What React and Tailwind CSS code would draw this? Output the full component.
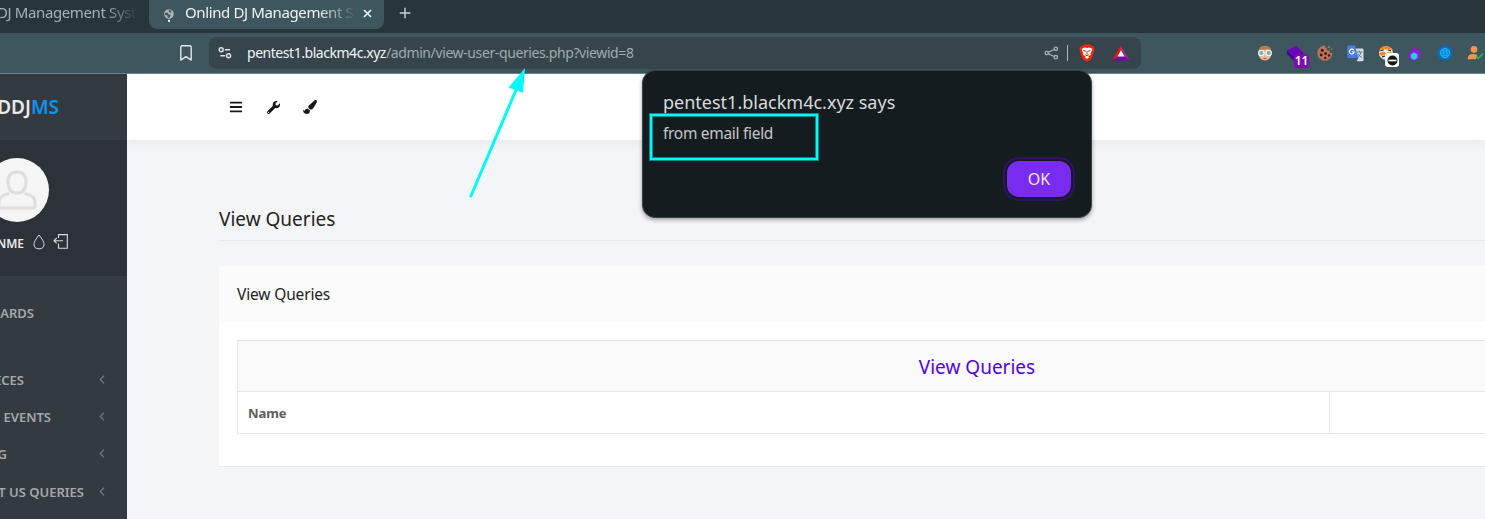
import React from "react";
import { FaBars, FaWrench, FaPaintBrush } from "react-icons/fa";

function GlobeIcon() {
  return (
    <svg width="12" height="16" viewBox="0 0 12 16" className="shrink-0">
      <circle cx="6" cy="6" r="4.8" fill="#a9b4b8" />
      <path d="M2 5 4.5 4.6 5.6 6.4 7.6 6.8 7 9 5 10 4.4 7.6 2.2 7Z M5.6 2 8.6 2.6 8 4.4 6.2 4.2Z" fill="#43575e" />
      <rect x="5" y="11.8" width="2" height="2" fill="#fff" />
    </svg>
  );
}

function TabStrip() {
  return (
    <div className="flex h-[33px] bg-[#28363c] text-[15px] leading-[20px] tracking-[-0.38px]">
      <div className="flex w-[136px] justify-end overflow-hidden pt-[2px] text-[#a9b0b3] [mask-image:linear-gradient(to_right,#000_105px,transparent_138px)]">
        <span className="shrink-0 whitespace-nowrap">Onlind DJ Management Syst</span>
      </div>
      <div className="ml-[13px] flex h-[29px] w-[235px] rounded-b-[8px] bg-[#3e565e] pl-[14px]">
        <div className="pt-[8px]">
          <GlobeIcon />
        </div>
        <div className="ml-[10px] w-[168px] overflow-hidden whitespace-nowrap pt-[2px] text-[#f2f4f5] [mask-image:linear-gradient(to_right,#000_133px,transparent_171px)]">
          Onlind DJ Management System
        </div>
        <svg width="9" height="9" viewBox="0 0 9 9" className="ml-[10px] mt-[9px]">
          <path d="M1 1 8 8M8 1 1 8" stroke="#f2f4f5" strokeWidth="1.7" />
        </svg>
      </div>
      <svg width="12" height="12" viewBox="0 0 12 12" className="ml-[15px] mt-[7px]">
        <path d="M6 .7V11.3M.7 6H11.3" stroke="#ccd2d5" strokeWidth="1.4" />
      </svg>
    </div>
  );
}

function Extensions() {
  return (
    <div className="ml-[116px] flex shrink-0 items-center">
      <svg width="16" height="16" viewBox="0 0 16 16">
        <ellipse cx="8" cy="8.5" rx="6.5" ry="7" fill="#e8b995" />
        <path d="M1.5 6Q2 .8 8 .8T14.5 6Q11 3.5 8 4.5T1.5 6Z" fill="#b07d50" />
        <circle cx="4.3" cy="8" r="2.7" fill="#7fb1bd" stroke="#f4f8f8" strokeWidth="1.1" />
        <circle cx="11.7" cy="8" r="2.7" fill="#7fb1bd" stroke="#f4f8f8" strokeWidth="1.1" />
        <path d="M6 13.2Q8 12.2 10 13.2Q8 15 6 13.2Z" fill="#d5514f" />
      </svg>
      <div className="relative ml-[13px] h-[16px] w-[18px]">
        <svg width="18" height="17" viewBox="0 0 18 17">
          <path d="M1 9 8 16 17 11V7L8 12 1 5Z" fill="#42078d" />
          <path d="M1 5.2 10 .8 17 7 8 12Z" fill="#6a05bd" />
        </svg>
        <span className="absolute left-[8px] top-[9px] flex h-[14px] w-[15px] items-center justify-center rounded-[3px] bg-[#7e09b4] text-[12px] font-semibold leading-none text-white">11</span>
      </div>
      <svg width="16" height="16" viewBox="0 0 16 16" className="ml-[13px]">
        <path d="M8 .5A7.6 7.6 0 1 0 15.5 8L13 7.8 12.5 5.5 10 5.5 9.8 3 8 2.6Z" fill="#bd7357" />
        <circle cx="12" cy="2" r="1" fill="#bd7357" />
        <circle cx="14.6" cy="4.3" r=".8" fill="#bd7357" />
        <g fill="#30201c">
          <circle cx="5.2" cy="5.2" r="1.5" />
          <circle cx="4.2" cy="10" r="1.4" />
          <circle cx="8.5" cy="8.6" r="1.4" />
          <circle cx="8.2" cy="12.9" r="1.2" />
          <circle cx="12" cy="10.5" r="1.3" />
        </g>
      </svg>
      <svg width="17" height="17" viewBox="0 0 17 17" className="ml-[14px]">
        <path d="M6 3.5H15.2Q16.5 3.5 16.5 4.8V15Q16.5 16.3 15.2 16.3H10Z" fill="#d5dce0" />
        <path d="M9.8 7H15.3M12.5 5.6V7M14.2 7Q13 11 10.4 12.4M11 9Q12.5 11.6 14.8 12.4" stroke="#66787f" fill="none" />
        <path d="M1.5.5H8L11.6 13H1.5Q.3 13 .3 11.8V1.7Q.3.5 1.5.5Z" fill="#467ee5" />
        <path d="M7.2 13H11.6L9.6 16Z" fill="#2a56b4" />
        <path d="M6.8 5.2A2.4 2.4 0 1 0 7.2 7H5" stroke="#fff" strokeWidth="1.2" fill="none" />
      </svg>
      <div className="relative ml-[14px] h-[16px] w-[18px]">
        <svg width="18" height="16" viewBox="0 0 18 16">
          <ellipse cx="8" cy="8" rx="7" ry="6.8" fill="#f1ebe5" />
          <path d="M1.2 5Q3 .8 8 1.2Q13 1 15.2 5Q11 3.6 8 4.6Q4 3.6 1.2 5ZM1 8 5.5 6.8 8 8.2 12 6.8 15 8 12 10.6 8 9.6 3 11Z" fill="#ef861e" />
          <path d="M2.4 5.6 5.8 5M9.8 5 13 5.6M4 11.8 7.5 11" stroke="#2c2929" strokeWidth="1.2" />
        </svg>
        <span className="absolute left-[7px] top-[8px] flex h-[14px] w-[14px] items-center justify-center rounded-[3px] bg-white">
          <svg width="11" height="11" viewBox="0 0 11 11">
            <circle cx="5.5" cy="5.5" r="5" fill="#161616" />
            <path d="M1.5 5.5H9.5" stroke="#fff" strokeWidth="1.7" />
          </svg>
        </span>
      </div>
      <svg width="12" height="16" viewBox="0 0 12 16" className="ml-[12px]">
        <path d="M6.5.3Q7 3.5 9 5.5L10 3.6Q13 9 11.4 12.5 9.8 15.8 6 15.8T.6 12.2Q-.2 9 2 6.2L2.6 8Q5.6 5 6.5.3Z" fill="#a208f2" />
        <path d="M6 7.2 9.4 9.2V13L6 15 2.8 13V9.2Z" fill="#10d8d5" />
      </svg>
      <svg width="16" height="16" viewBox="0 0 16 16" className="ml-[17px]">
        <circle cx="8" cy="8" r="6.8" fill="#0b73cb" stroke="#0d67ba" strokeWidth="1.8" strokeDasharray="2.6 1" />
        <g stroke="#20b7ee" strokeWidth=".9" fill="none">
          <circle cx="8" cy="8" r="4.6" />
          <ellipse cx="8" cy="8" rx="2" ry="4.6" />
          <path d="M3.4 8H12.6M4 5.7H12M4 10.3H12" />
        </g>
      </svg>
      <svg width="16" height="16" viewBox="0 0 16 16" className="ml-[14px]">
        <circle cx="7" cy="4.4" r="3.3" fill="#f9954b" />
        <path d="M.6 14.2Q.6 9 6 9Q10 9 10.6 11L8.8 14.2Z" fill="#f9954b" />
        <path d="M9.2 11.2 11.4 13.4 16 8.6" stroke="#18b957" strokeWidth="1.6" fill="none" />
      </svg>
    </div>
  );
}

function Toolbar() {
  return (
    <div className="flex h-[41px] overflow-visible border-b border-[#6f8388] bg-[#3e565e] pl-[180px]">
      <svg width="12" height="16" viewBox="0 0 12 16" className="mt-[12px] shrink-0">
        <path d="M.8 15.1V2.2Q.8.8 2.2.8H9.8Q11.2.8 11.2 2.2V15.1L6 11.6Z" fill="none" stroke="#e2e6e8" strokeWidth="1.4" strokeLinejoin="round" />
      </svg>
      <div className="ml-[17px] mt-[4px] flex h-[32px] w-[932px] shrink-0 items-center rounded-[8px] bg-[#35454b] pl-[9px]">
        <svg width="14" height="14" viewBox="0 0 14 14">
          <g fill="none" stroke="#e2e6e8" strokeWidth="1.4">
            <circle cx="3.2" cy="3.8" r="2" />
            <circle cx="10.6" cy="9.8" r="2" />
            <path d="M6.8 3.8H12M2.4 9.8H7.2" />
          </g>
        </svg>
        <span className="ml-[15px] w-[797px] whitespace-nowrap text-[14px] leading-[20px] tracking-[-0.39px] text-[#a2abae]">
          <span className="tracking-[-0.46px] text-[#f2f4f5]">pentest1.blackm4c.xyz</span>/admin/view-user-queries.php?viewid=8
        </span>
        <svg width="15" height="14" viewBox="0 0 15 14">
          <g fill="none" stroke="#a8b0b3" strokeWidth="1.3">
            <circle cx="2.8" cy="7" r="1.7" />
            <circle cx="11.8" cy="2.8" r="1.7" />
            <circle cx="11.8" cy="11.2" r="1.7" />
            <path d="M4.4 6.2 10.2 3.5M4.4 7.8 10.2 10.5" />
          </g>
        </svg>
        <div className="ml-[8px] h-[16px] w-px bg-[#aeb5b8]" />
        <svg width="16" height="18" viewBox="0 0 16 18" className="ml-[11px]">
          <path d="M5 .4H11L12.5 2 14.4 2.2 15.6 5 15 7 13.4 13.5Q11.5 16 8 17.8 4.5 16 2.6 13.5L1 7 .4 5 1.6 2.2 3.5 2Z" fill="#fb2409" />
          <path d="M3.8 4 6.3 3.6 8 4.1 9.7 3.6 12.2 4 13.4 6 11.6 9.3 11.8 11 9.2 12.3 10.2 13.3 8 15 5.8 13.3 6.8 12.3 4.2 11 4.4 9.3 2.6 6Z" fill="#fff" />
          <path d="M4.5 6.5 7 7.3M11.5 6.5 9 7.3M8 7V10.5M6.2 10.8 8 11.7 9.8 10.8" stroke="#fb2409" strokeWidth="1" fill="none" />
        </svg>
        <svg width="18" height="16" viewBox="0 0 18 16" className="ml-[17px]">
          <path d="M9 .2 0 15.7 5.6 11.2 9 5.3Z" fill="#ff1408" />
          <path d="M9 .2 18 15.7 12.4 11.2 9 5.3Z" fill="#9c2b83" />
          <path d="M0 15.7H18L12.4 11.2H5.6Z" fill="#6c11a4" />
          <path d="M9 5.3 12.5 11.4H5.5Z" fill="#fff" />
        </svg>
      </div>
      <Extensions />
    </div>
  );
}

const menu = [
  { label: "SERVICES", width: "w-[24px]" },
  { label: "LIST OF EVENTS", width: "w-[51px]" },
  { label: "BOOKING", width: "w-[7px]" },
  { label: "CONTACT US QUERIES", width: "w-[84px]" },
];

function Sidebar() {
  return (
    <aside className="flex w-[127px] shrink-0 flex-col overflow-hidden bg-[#333a40]">
      <div className="flex h-[66px] w-[59px] items-center justify-end pt-[1px] text-[19px] font-semibold text-[#e9eaeb]">
        <span className="shrink-0">
          ODDJ<span className="text-[#0a96f5]">MS</span>
        </span>
      </div>
      <div className="h-[136px] bg-[#2d3138] pt-[18px]">
        <div className="-ml-[15px] flex h-[64px] w-[64px] items-center justify-center rounded-full bg-[#f5f5f5]">
          <svg width="40" height="40" viewBox="0 0 40 40" fill="none" stroke="#dedede" strokeWidth="3">
            <path d="M20 2Q29 2 29 11.5Q29 23 20 23T11 11.5Q11 2 20 2Z" />
            <path d="M12.5 23.5Q2 25.5 2 32V35.5Q2 38 4.5 38H35.5Q38 38 38 35.5V32Q38 25.5 27.5 23.5" />
          </svg>
        </div>
        <div className="mt-[9px] flex h-[21px] items-center">
          <div className="flex w-[24px] justify-end text-[12px] font-semibold leading-[20px] text-[#e9eaeb]">
            <span className="shrink-0 pt-[4px]">ADMINME</span>
          </div>
          <svg width="12" height="16" viewBox="0 0 12 16" className="ml-[9px]">
            <path d="M6 1Q1 7.2 1 10.2 1 14.8 6 14.8T11 10.2Q11 7.2 6 1Z" fill="none" stroke="#dadcdd" />
          </svg>
          <svg width="15" height="15" viewBox="0 0 15 15" className="ml-[8px]">
            <path d="M5.5 4V.6H14.3V14.3H5.5V9.5M10 6.7H1M3.7 4 1 6.7 3.7 9.4" fill="none" stroke="#dadcdd" strokeWidth="1.1" />
          </svg>
        </div>
      </div>
      <div className="mt-[27px] flex h-[20px] w-[34px] justify-end text-[13px] font-semibold leading-[20px] text-[#a5a8ab]">
        <span className="shrink-0">DASHBOARDS</span>
      </div>
      <div className="mt-[38px] flex flex-col">
        {menu.map((m) => (
          <div key={m.label} className="flex h-[37.3px] items-center justify-between pr-[22px]">
            <div className={"flex justify-end whitespace-nowrap text-[13px] font-semibold leading-[20px] text-[#a5a8ab] " + m.width}>
              <span className="shrink-0">{m.label}</span>
            </div>
            <svg width="6" height="9" viewBox="0 0 6 9" className="-mt-[1px]">
              <path d="M5 .7 1.2 4.5 5 8.3" fill="none" stroke="#71767b" strokeWidth="1.3" />
            </svg>
          </div>
        ))}
      </div>
    </aside>
  );
}

function Content() {
  return (
    <main className="flex min-w-0 flex-1 flex-col bg-[#f4f5f7]">
      <header className="flex h-[66px] shrink-0 items-center bg-white pl-[102px] text-[#17191b] shadow-[0_3px_10px_rgba(0,0,0,0.05)]">
        <FaBars size={14} />
        <FaWrench size={13} className="ml-[24px]" />
        <FaPaintBrush size={14} className="ml-[23px]" />
      </header>
      <div className="pl-[92px] pt-[65px]">
        <h1 className="h-[36px] border-b border-[#e8e9ea] text-[19px] leading-[28px] text-[#222]">View Queries</h1>
        <section className="mt-[25px] h-[201px] border-b border-[#e8e9ea] bg-white">
          <h2 className="h-[56px] bg-[#fbfbfb] pl-[18px] text-[15.5px] leading-[57px] tracking-[-0.15px] text-[#222]">View Queries</h2>
          <div className="ml-[18px] mt-[18px] h-[94px] w-[1584px] border border-[#e6e7e8]">
            <div className="flex h-[51px] justify-center border-b border-[#e6e7e8] bg-[#fafafa] pr-[104px] text-[19px] leading-[52px] text-[#5200e8]">
              View Queries
            </div>
            <div className="flex h-[41px] text-[13px] font-bold leading-[43px] tracking-[-0.1px] text-[#5c5c5c]">
              <div className="w-[1092px] border-r border-[#e6e7e8] pl-[10px]">Name</div>
            </div>
          </div>
        </section>
      </div>
    </main>
  );
}

function AlertDialog() {
  return (
    <div className="absolute left-[642px] top-[70px] h-[148px] w-[450px] rounded-[13px] border border-[#394347] bg-[#151c1f] pl-[20px] pt-[18px] text-[#d8dbdc] shadow-[0_2px_4px_rgba(0,0,0,0.35)]">
      <div className="text-[18px] leading-[26px]">pentest1.blackm4c.xyz says</div>
      <div className="mt-[7px] text-[15.5px] leading-[22px] tracking-[-0.3px] text-[#c4c7c8]">from email field</div>
      <div className="mt-[17px] flex justify-end pr-[20px]">
        <button className="h-[36px] w-[64px] rounded-[12px] bg-[#792bf0] text-[16px] leading-[34px] text-[#f0e8ff] outline-2 outline-offset-2 outline-[#32116b]">OK</button>
      </div>
      <div className="absolute left-[7px] top-[43px] h-[46px] w-[168px] border-[2px] border-[#00f8fa] shadow-[0_0_0_1px_#04898b,inset_0_0_0_1px_#04898b]" />
    </div>
  );
}

export default function App() {
  return (
    <div className="relative flex h-[519px] w-[1485px] flex-col overflow-hidden font-['Noto_Sans',sans-serif]">
      <TabStrip />
      <Toolbar />
      <div className="flex min-h-0 flex-1">
        <Sidebar />
        <Content />
      </div>
      <AlertDialog />
      <svg width="60" height="134" viewBox="0 0 60 134" className="absolute left-[467px] top-[66px]">
        <path d="M3.5 131 49 24" stroke="#00fbfc" strokeWidth="3" />
        <path d="M58 2 41.5 21.5 56 27Z" fill="#00fbfc" />
      </svg>
    </div>
  );
}
